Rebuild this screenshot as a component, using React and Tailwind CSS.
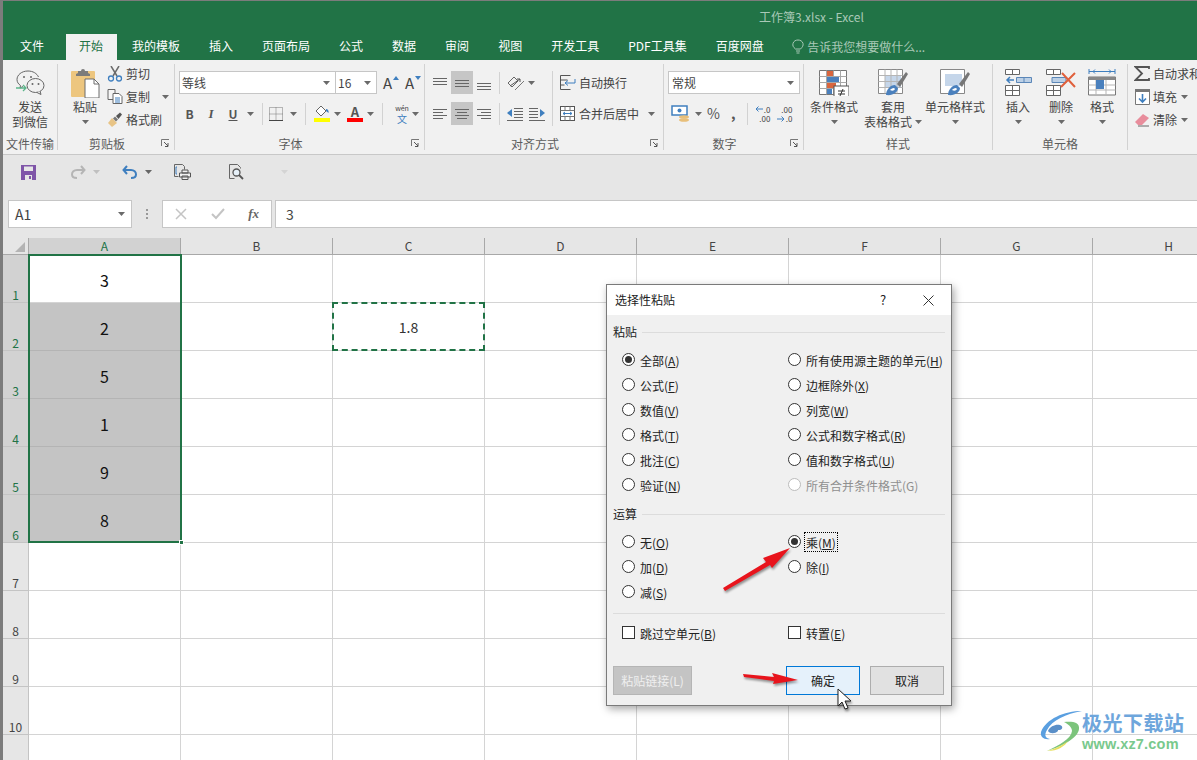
import React from "react";

const Caret = ({ className = "", color = "#6a6a6a" }) => (
  <svg width="7" height="4" viewBox="0 0 7 4" className={`shrink-0 ${className}`}>
    <path d="M0 0h7L3.5 4z" fill={color} />
  </svg>
);

const Sep = ({ className = "h-[24px]" }) => <div className={`w-px shrink-0 bg-[#d2d2d2] ${className}`} />;

const Launcher = () => (
  <svg width="9" height="9" viewBox="0 0 9 9" className="absolute right-[4px] bottom-[2px]">
    <path d="M.5 7V.5H8M.5.5" fill="none" stroke="#777" />
    <path d="M3 3l4 4M7 4v3.5H4" fill="none" stroke="#555" />
  </svg>
);

const Group = ({ width, label, launcher, children }) => (
  <div className={`relative flex h-full shrink-0 flex-col border-r border-[#d2d2d2] ${width}`}>
    <div className="h-[72px] shrink-0">{children}</div>
    <div className={`h-[15px] shrink-0 text-center text-[12px] leading-[15px] whitespace-nowrap text-[#5c5c5c] ${launcher ? "pr-[18px]" : ""}`}>{label}</div>
    {launcher && <Launcher />}
  </div>
);

const LargeButton = ({ icon, lines, caret = true, inlineCaret, width }) => (
  <div className={`flex shrink-0 flex-col items-center ${width}`}>
    <div className="flex h-[35px] items-center justify-center pt-[2px]">{icon}</div>
    {lines.map((l, i) => (
      <div key={l} className="flex h-[15px] items-center text-[12px] whitespace-nowrap text-[#444]">
        {l}
        {inlineCaret && i === lines.length - 1 && <Caret className="ml-[3px]" />}
      </div>
    ))}
    {caret && lines.length === 1 && <div className="flex h-[15px] items-center"><Caret /></div>}
    {caret && lines.length === 2 && !inlineCaret && <Caret className="mt-[5px]" />}
  </div>
);

const SmallButton = ({ icon, text, caret, caretGap = "ml-[6px]" }) => (
  <div className="flex h-[23px] items-center">
    <div className="flex w-[16px] justify-center">{icon}</div>
    <span className="ml-[3px] text-[12px] whitespace-nowrap text-[#444]">{text}</span>
    {caret && <Caret className={caretGap} />}
  </div>
);

const WechatIcon = () => (
  <svg width="30" height="26" viewBox="0 0 30 26">
    <path d="M13 1C6.5 1 2 5 2 9.500c0 2.500 1.300 4.500 3.500 6L5 18l3-1.500" fill="none" stroke="#666" />
    <path d="M13 1c5 0 9 2.500 10.500 6" fill="none" stroke="#666" />
    <circle cx="9" cy="7" r="1" fill="#666" /><circle cx="16" cy="7" r="1" fill="#666" />
    <ellipse cx="20.500" cy="15.500" rx="8.500" ry="7" fill="#f1f1f1" stroke="#666" />
    <path d="M25 21l1 3.500-4-2" fill="#f1f1f1" stroke="#666" />
    <circle cx="17.500" cy="14" r="1" fill="#666" /><circle cx="23.500" cy="14" r="1" fill="#666" />
    <path d="M1 18h10M8 15l3 3-3 3" fill="none" stroke="#5cb58a" strokeWidth="1.300" />
  </svg>
);

const PasteIcon = () => (
  <svg width="30" height="30" viewBox="0 0 30 30">
    <rect x="1" y="3" width="24" height="26" rx="1" fill="#edc67f" />
    <path d="M8 5V3h3a2 2 0 014 0h3v2l2 1v2H6V6z" fill="#7b7b7b" />
    <path d="M15 11h9l5 5v14H15z" fill="#fff" stroke="#6d6d6d" />
    <path d="M24 11v5h5" fill="none" stroke="#6d6d6d" />
  </svg>
);

const ScissorsIcon = () => (
  <svg width="16" height="16" viewBox="0 0 16 16">
    <path d="M4 0l6 10M12 0L6 10" stroke="#6b6b6b" strokeWidth="1.500" fill="none" />
    <circle cx="4" cy="12.500" r="2.500" fill="none" stroke="#3f7fbf" strokeWidth="1.300" />
    <circle cx="12" cy="12.500" r="2.500" fill="none" stroke="#3f7fbf" strokeWidth="1.300" />
  </svg>
);

const CopyIcon = () => (
  <svg width="16" height="15" viewBox="0 0 16 15">
    <path d="M1 .5h7v10H1z" fill="#f6f6f6" stroke="#666" />
    <path d="M6 4.500h6l3 3v7H6z" fill="#fff" stroke="#666" />
    <path d="M8 9h5M8 11h5M8 13h5" stroke="#3f7fbf" />
  </svg>
);

const BrushIcon = () => (
  <svg width="16" height="16" viewBox="0 0 16 16">
    <path d="M1 11l4-5 5 5-5 4z" fill="#e8c486" />
    <path d="M6 6.500l2-2 3 3-2 2z" fill="#777" />
    <path d="M9 4l4-3.500 2 2L11.500 7z" fill="#555" />
  </svg>
);

const GrowFont = ({ down }) => (
  <div className="relative flex h-[23px] w-[16px] items-center">
    <span className="text-[15px] leading-none text-[#444]">A</span>
    <svg width="6" height="4" viewBox="0 0 6 4" className="absolute top-[5px] right-0">
      <path d={down ? "M0 0h6L3 4z" : "M0 4h6L3 0z"} fill="#3f7fbf" />
    </svg>
  </div>
);

const BorderIcon = () => (
  <svg width="14" height="14" viewBox="0 0 14 14">
    <path d="M.5.500h13v13H.5zM7 .5v13M.5 7h13" fill="none" stroke="#777" strokeDasharray="1 1" />
    <path d="M0 13.500h14" stroke="#444" />
  </svg>
);

const FillIcon = () => (
  <svg width="16" height="17" viewBox="0 0 16 17">
    <path d="M7 1l5 5-5 5-5-5z" fill="#fff" stroke="#666" />
    <path d="M12 4c2 0 3 2 2.500 4L12 6z" fill="#3f7fbf" />
    <rect y="13" width="16" height="4" fill="#ffff00" />
  </svg>
);

const FontColorIcon = () => (
  <div className="flex w-[16px] flex-col items-center">
    <span className="text-[13px] leading-[13px] font-bold text-[#555]">A</span>
    <div className="h-[4px] w-[16px] bg-[#ff0000]" />
  </div>
);

const Wen = () => (
  <div className="flex w-[18px] flex-col items-center">
    <span className="h-[9px] text-[7px] leading-[9px] text-[#444]">wén</span>
    <span className="h-[11px] text-[10px] leading-[11px] text-[#3f7fbf]">文</span>
  </div>
);

const Lines = ({ rows, w = 14 }) => (
  <svg width={w} height="14" viewBox={`0 0 ${w} 14`}>
    {rows.map((r, i) => (
      <path key={i} d={`M${r[0]} ${r[1]}.5H${r[2]}`} stroke="#666" />
    ))}
  </svg>
);

const AlignSlot = ({ rows, active }) => (
  <div className={`flex h-[23px] w-[22px] items-center justify-center ${active ? "bg-[#c6c6c6]" : ""}`}>
    <Lines rows={rows} />
  </div>
);

const Orientation = () => (
  <svg width="18" height="16" viewBox="0 0 18 16">
    <path d="M1 8l6-6 4 4-6 6z" fill="none" stroke="#666" />
    <path d="M3 11l10-7M13 4l-3 0M13 4l0 3" stroke="#555" fill="none" />
    <path d="M8 15l9-9" stroke="#777" />
  </svg>
);

const IndentIcon = ({ flip }) => (
  <svg width="16" height="14" viewBox="0 0 16 14" className={flip ? "-scale-x-100" : ""}>
    <path d="M7 1.500h9M7 4.500h9M7 7.500h9M7 10.500h9M0 13.500h16" stroke="#666" />
    <path d="M0 6l5-4v8z" fill="#3f7fbf" />
  </svg>
);

const WrapIcon = () => (
  <svg width="16" height="15" viewBox="0 0 16 15">
    <path d="M.5.500h10M.5 14.500h10M.5.500v14M.5 5h7M.5 10h4" stroke="#555" fill="none" />
    <path d="M5 8h10V4M5 8l3-2.500M5 8l3 2.500" stroke="#3f7fbf" fill="none" />
  </svg>
);

const MergeIcon = () => (
  <svg width="15" height="15" viewBox="0 0 15 15">
    <rect x=".5" y=".5" width="14" height="14" fill="#fff" stroke="#555" />
    <path d="M.5 4.500h14M.5 10.500h14M5 .5v4M10 .5v4M5 10.500v4M10 10.500v4" stroke="#777" />
    <path d="M3 7.500h9M3 7.500l2-1.500M3 7.500L5 9M12 7.500L10 6M12 7.500L10 9" stroke="#3f7fbf" fill="none" />
  </svg>
);

const CurrencyIcon = () => (
  <svg width="19" height="18" viewBox="0 0 19 18">
    <rect x="1" y="1" width="15" height="9" fill="#fff" stroke="#3f7fbf" strokeWidth="1.500" />
    <circle cx="8.500" cy="5.500" r="2" fill="#3f7fbf" />
    <ellipse cx="13" cy="12" rx="5" ry="1.800" fill="#e8bf7a" />
    <ellipse cx="13" cy="15" rx="5" ry="1.800" fill="#e8bf7a" />
  </svg>
);

const DecimalIcon = ({ more }) => (
  <div className="relative flex h-[18px] w-[15px] flex-col items-end text-[8px] leading-[9px] text-[#444]">
    <span className="h-[9px]">{more ? ".00" : ".0"}</span>
    <span className="h-[9px]">{more ? ".0" : ".00"}</span>
    <svg width="8" height="6" viewBox="0 0 8 6" className={`absolute left-0 ${more ? "bottom-[1px]" : "top-[1px]"}`}>
      <path d={more ? "M0 3h7M4.500 .5L7 3 4.500 5.500" : "M8 3H1M3.500 .5L1 3l2.500 2.500"} stroke="#3f7fbf" fill="none" />
    </svg>
  </div>
);

const CondIcon = () => (
  <svg width="30" height="26" viewBox="0 0 30 26">
    <path d="M.5.500h27v24H.5z" fill="#fff" stroke="#777" />
    <path d="M.5 6.500h27M.5 12.500h27M.5 18.500h27M7.500.5v24M14.500.5v24M21.500.5v24" stroke="#a8a8a8" />
    <rect x="8" y="1" width="6" height="5" fill="#d9663f" />
    <rect x="8" y="7" width="12" height="5" fill="#4a80bd" />
    <rect x="8" y="13" width="9" height="5" fill="#d9663f" />
    <rect x="8" y="19" width="5" height="5" fill="#4a80bd" />
    <rect x="15" y="16" width="15" height="13" fill="#fff" stroke="#555" />
    <path d="M19 21h7M19 24h7M24 19l-3 7" stroke="#333" />
  </svg>
);

const TableIcon = ({ cell }) => (
  <svg width="30" height="28" viewBox="0 0 30 28">
    <path d="M.5.500h24v24H.5z" fill="#fff" stroke="#888" />
    {cell ? (
      <path d="M5 5h17v12H5z" fill="#c5d6ea" />
    ) : (
      <>
        <path d="M7 7h16v12H7z" fill="#c5d6ea" />
        <path d="M.5 6.500h24M.5 12.500h24M.5 18.500h24M7 .5v24M13 .5v24M19 .5v24" stroke="#b5b5b5" />
      </>
    )}
    <path d="M19 15L28 3l2 2-8 13z" fill="#777" />
    <path d="M8 26c0-5 4-10 9-10l3 3c0 4-5 8-12 7z" fill="#4a80bd" />
    <path d="M12 21c1-1 2-2 4-2l1 1c-1 2-3 2-5 1z" fill="#fff" />
  </svg>
);

const InsertIcon = () => (
  <svg width="27" height="27" viewBox="0 0 27 27">
    <path d="M.5.500h14v5H.5zM7.500.5v5M.5 16.500h14v10H.5zM.5 21.500h14M7.500 16.500v10" fill="#fff" stroke="#666" />
    <path d="M11.500 8.500h15v5h-15zM19 8.500v5" fill="#bcd0e6" stroke="#5b87b8" />
    <path d="M9 11H2M5 8l-3 3 3 3" stroke="#3f7fbf" strokeWidth="1.500" fill="none" />
  </svg>
);

const DeleteIcon = () => (
  <svg width="30" height="27" viewBox="0 0 30 27">
    <path d="M.5.500h14v5H.5zM7.500.5v5M.5 16.500h14v10H.5zM.5 21.500h14M7.500 16.500v10" fill="#fff" stroke="#666" />
    <path d="M6 8.500h14v5H6z" fill="#bcd0e6" stroke="#5b87b8" />
    <path d="M16 4l13 14M29 4L15 18" stroke="#e0603c" strokeWidth="2" />
  </svg>
);

const FormatIcon = () => (
  <svg width="28" height="30" viewBox="0 0 28 30">
    <path d="M1 3.500h26M1 1v5M27 1v5M5 3.500l2-2M5 3.500l2 2M23 3.500l-2-2M23 3.500l-2 2" stroke="#3f7fbf" fill="none" />
    <path d="M.5 9h27v18H.5z" fill="#fff" stroke="#777" />
    <path d="M.5 9h27v3H.5z" fill="#888" />
    <path d="M.5 17h27M.5 22h27M8 12v15M18 12v15" stroke="#b5b5b5" />
    <rect x="8" y="12" width="8" height="9" fill="#4a80bd" />
  </svg>
);

const SigmaIcon = () => (
  <svg width="16" height="15" viewBox="0 0 16 15">
    <path d="M15 3V1H1.500L8 7.500 1.500 14H15v-2" fill="none" stroke="#555" strokeWidth="1.800" />
  </svg>
);

const DownFillIcon = () => (
  <svg width="15" height="16" viewBox="0 0 15 16">
    <path d="M.5.500h14v15H.5z" fill="#fff" stroke="#777" />
    <path d="M0 0h15v3H0z" fill="#777" />
    <path d="M7.500 5v8M4 9.500l3.500 3.500L11 9.500" stroke="#3f7fbf" strokeWidth="1.600" fill="none" />
  </svg>
);

const EraserIcon = () => (
  <svg width="16" height="14" viewBox="0 0 16 14">
    <path d="M1 9l8-8 6 4-7 7H4z" fill="#e88d9c" />
    <path d="M4 13h11" stroke="#666" />
  </svg>
);

const SaveIcon = () => (
  <svg width="15" height="15" viewBox="0 0 15 15">
    <path d="M0 0h15v15H0z" fill="#7f55a8" />
    <path d="M3 1.500h9v4.500H3z" fill="#e6e6e6" />
    <path d="M4 10h7v5H4z" fill="#e6e6e6" />
    <path d="M8 11h2v3H8z" fill="#7f55a8" />
  </svg>
);

const UndoIcon = ({ color, flip }) => (
  <svg width="16" height="14" viewBox="0 0 16 14" className={flip ? "-scale-x-100" : ""}>
    <path d="M5 1L1.500 5 5 9" fill="none" stroke={color} strokeWidth="2" />
    <path d="M2 5h7c3 0 5 2 5 4.500S12 13 9 13" fill="none" stroke={color} strokeWidth="2" />
  </svg>
);

const PreviewIcon = () => (
  <svg width="17" height="16" viewBox="0 0 17 16">
    <path d="M.5.500h8l2 2v3M.5.500v12h4" fill="none" stroke="#666" />
    <path d="M3 3H2v7h1" stroke="#3f7fbf" fill="none" />
    <path d="M8 6h6v3H8zM5.500 9h11v4h-11zM8 12h6v3.500H8z" fill="#f1f1f1" stroke="#555" />
  </svg>
);

const MagnifierIcon = () => (
  <svg width="15" height="16" viewBox="0 0 15 16">
    <path d="M.5 14.500V.5h8l3 3v1M.5 14.500h5" fill="none" stroke="#666" />
    <circle cx="7.500" cy="8.500" r="3.500" fill="#e6f0f8" stroke="#555" strokeWidth="1.300" />
    <path d="M10 11l4 4" stroke="#555" strokeWidth="1.800" />
  </svg>
);

const Ribbon = () => (
  <div className="flex h-[95px] overflow-hidden border-b border-[#c8c8c8] bg-[#f1f1f1] pt-[4px] pb-[4px]">
    <Group width="w-[55px]" label="文件传输">
      <LargeButton width="w-full" caret={false} icon={<WechatIcon />} lines={["发送", "到微信"]} />
    </Group>

    <Group width="w-[117px]" label="剪贴板" launcher>
      <div className="flex pl-[12px]">
        <LargeButton width="w-[30px]" icon={<PasteIcon />} lines={["粘贴"]} />
        <div className="-mt-[2px] ml-[7px]">
          <SmallButton icon={<ScissorsIcon />} text="剪切" />
          <SmallButton icon={<CopyIcon />} text="复制" caret caretGap="ml-[12px]" />
          <SmallButton icon={<BrushIcon />} text="格式刷" />
        </div>
      </div>
    </Group>

    <Group width="w-[250px]" label="字体" launcher>
      <div className="pt-[7px] pl-[4px]">
        <div className="flex h-[23px] items-center">
          <div className="flex h-[23px] w-[157px] items-center justify-between border border-[#c6c6c6] bg-white pr-[5px] pl-[2px] text-[12px] text-[#444]">
            等线 <Caret />
          </div>
          <div className="flex h-[23px] w-[41px] items-center justify-between border border-l-0 border-[#c6c6c6] bg-white pr-[5px] pl-[2px] text-[12px] text-[#444]">
            16 <Caret />
          </div>
          <div className="ml-[6px]"><GrowFont /></div>
          <div className="ml-[6px]"><GrowFont down /></div>
        </div>
        <div className="mt-[8px] flex h-[23px] items-center">
          <span className="w-[21px] text-center text-[12px] font-bold text-[#555]">B</span>
          <span className="w-[22px] text-center font-['Liberation_Serif',serif] text-[13px] font-bold text-[#555] italic">I</span>
          <span className="w-[22px] text-center text-[12px] font-bold text-[#555] underline">U</span>
          <Caret className="ml-[3px]" />
          <Sep className="ml-[8px] h-[22px]" />
          <div className="ml-[6px]"><BorderIcon /></div>
          <Caret className="ml-[7px]" />
          <Sep className="ml-[8px] h-[22px]" />
          <div className="ml-[8px]"><FillIcon /></div>
          <Caret className="ml-[4px]" />
          <div className="ml-[6px]"><FontColorIcon /></div>
          <Caret className="ml-[4px]" />
          <Sep className="ml-[8px] h-[22px]" />
          <div className="ml-[10px]"><Wen /></div>
          <Caret className="ml-[1px]" />
        </div>
      </div>
    </Group>

    <Group width="w-[239px]" label="对齐方式" launcher>
      <div className="flex pt-[7px] pl-[4px]">
        <div className="w-[123px]">
          <div className="flex h-[23px] items-center">
            <AlignSlot rows={[[0, 2, 14], [0, 5, 14], [0, 8, 14]]} />
            <AlignSlot active rows={[[0, 4, 14], [0, 7, 14], [0, 10, 14]]} />
            <AlignSlot rows={[[0, 7, 14], [0, 10, 14], [0, 13, 14]]} />
            <Sep className="ml-[4px] h-[22px]" />
            <div className="ml-[7px]"><Orientation /></div>
            <Caret className="ml-[3px]" />
          </div>
          <div className="mt-[8px] flex h-[23px] items-center">
            <AlignSlot rows={[[0, 2, 14], [0, 5, 10], [0, 8, 14], [0, 11, 10]]} />
            <AlignSlot active rows={[[0, 2, 14], [2, 5, 12], [0, 8, 14], [2, 11, 12]]} />
            <AlignSlot rows={[[0, 2, 14], [4, 5, 14], [0, 8, 14], [4, 11, 14]]} />
            <Sep className="ml-[4px] h-[22px]" />
            <div className="ml-[7px]"><IndentIcon /></div>
            <div className="ml-[6px]"><IndentIcon flip /></div>
          </div>
        </div>
        <Sep className="h-[55px]" />
        <div className="pl-[7px]">
          <div className="flex h-[23px] items-center">
            <WrapIcon />
            <span className="ml-[3px] text-[12px] whitespace-nowrap text-[#444]">自动换行</span>
          </div>
          <div className="mt-[8px] flex h-[23px] items-center">
            <MergeIcon />
            <span className="ml-[4px] text-[12px] whitespace-nowrap text-[#444]">合并后居中</span>
            <Caret className="ml-[9px]" />
          </div>
        </div>
      </div>
    </Group>

    <Group width="w-[140px]" label="数字" launcher>
      <div className="pt-[7px] pl-[4px]">
        <div className="flex h-[23px] w-[132px] items-center justify-between border border-[#c6c6c6] bg-white pr-[5px] pl-[3px] text-[12px] text-[#444]">
          常规 <Caret />
        </div>
        <div className="mt-[8px] flex h-[23px] items-center pl-[3px]">
          <CurrencyIcon />
          <Caret className="ml-[5px]" />
          <span className="ml-[5px] text-[14px] text-[#555]">%</span>
          <span className="ml-[11px] text-[14px] font-bold text-[#555]">,</span>
          <Sep className="ml-[12px] h-[22px]" />
          <div className="ml-[7px]"><DecimalIcon /></div>
          <div className="ml-[7px]"><DecimalIcon more /></div>
        </div>
      </div>
    </Group>

    <Group width="w-[189px]" label="样式">
      <div className="flex pl-[4px]">
        <LargeButton width="w-[52px]" icon={<CondIcon />} lines={["条件格式"]} />
        <LargeButton width="ml-[2px] w-[62px]" inlineCaret icon={<TableIcon />} lines={["套用", "表格格式"]} />
        <LargeButton width="ml-[1px] w-[60px]" icon={<TableIcon cell />} lines={["单元格样式"]} />
      </div>
    </Group>

    <Group width="w-[135px]" label="单元格">
      <div className="flex pl-[5px]">
        <LargeButton width="w-[40px]" icon={<InsertIcon />} lines={["插入"]} />
        <LargeButton width="ml-[3px] w-[40px]" icon={<DeleteIcon />} lines={["删除"]} />
        <LargeButton width="ml-[1px] w-[40px]" icon={<FormatIcon />} lines={["格式"]} />
      </div>
    </Group>

    <div className="-mt-[2px] min-w-0 flex-1 overflow-hidden pl-[6px]">
      <SmallButton icon={<SigmaIcon />} text="自动求和" />
      <SmallButton icon={<DownFillIcon />} text="填充" caret caretGap="ml-[4px]" />
      <SmallButton icon={<EraserIcon />} text="清除" caret caretGap="ml-[4px]" />
    </div>
  </div>
);

const tabs = ["我的模板", "插入", "页面布局", "公式", "数据", "审阅", "视图", "开发工具", "PDF工具集", "百度网盘"];

const TitleBar = () => (
  <div className="bg-[#217346]">
    <div className="h-[33px] pt-[8px] pl-[756px] text-[12px] leading-[16px] text-[#a9c9b7]">工作簿3.xlsx - Excel</div>
    <div className="flex h-[26px] items-start pl-[2.5px] text-[12px] text-white">
      <div className="mr-[6px] h-full px-[14.500px] pt-[3px]">文件</div>
      <div className="mx-[1px] h-full bg-[#f1f1f1] px-[13.500px] pt-[3px] text-[#217346]">开始</div>
      {tabs.map((t) => (
        <div key={t} className="h-full px-[14.500px] pt-[3px] whitespace-nowrap">{t}</div>
      ))}
      <div className="ml-[14px] flex h-full items-center pb-[1px] text-[#a9c9b7]">
        <svg width="12" height="15" viewBox="0 0 12 15" className="mr-[3px]">
          <path d="M3.500 10C1 8 .5 6.500 1 4.500 1.500 2 4 1 6 1s4.500 1 5 3.500c.5 2-.5 3.500-2.500 5.500zM4 12h4M4.500 14h3" fill="none" stroke="#a9c9b7" />
        </svg>
        告诉我您想要做什么...
      </div>
    </div>
  </div>
);

const QuickAccess = () => (
  <div className="flex h-[42px] items-center bg-[#e6e6e6] pb-[8px]">
    <div className="ml-[18px]"><SaveIcon /></div>
    <div className="ml-[34px]"><UndoIcon color="#b5b5b5" flip /></div>
    <Caret className="ml-[7px]" color="#c0c0c0" />
    <div className="ml-[22px]"><UndoIcon color="#3f7fbf" /></div>
    <Caret className="ml-[7px]" color="#666" />
    <div className="ml-[22px]"><PreviewIcon /></div>
    <div className="ml-[38px]"><MagnifierIcon /></div>
    <Caret className="ml-[37px]" color="#d4d4d4" />
  </div>
);

const FormulaBar = () => (
  <div className="flex h-[41px] items-start bg-[#e6e6e6] pt-[3px] pl-[5px] text-[#444]">
    <div className="flex h-[28px] w-[124px] items-center justify-between border border-[#c6c6c6] bg-white pr-[6px] pl-[6px] text-[14px]">
      A1 <Caret />
    </div>
    <div className="flex h-[28px] w-[30px] flex-col items-center justify-center gap-[2px]">
      <i className="h-[2px] w-[2px] bg-[#999]" /><i className="h-[2px] w-[2px] bg-[#999]" /><i className="h-[2px] w-[2px] bg-[#999]" />
    </div>
    <div className="flex h-[28px] w-[110px] items-center justify-between border border-[#c6c6c6] bg-white px-[12px]">
      <svg width="12" height="12" viewBox="0 0 12 12"><path d="M1 1l10 10M11 1L1 11" stroke="#c4c4c4" strokeWidth="1.500" /></svg>
      <svg width="14" height="12" viewBox="0 0 14 12"><path d="M1 6l4 4 8-9" stroke="#c4c4c4" strokeWidth="2" fill="none" /></svg>
      <span className="font-['Liberation_Serif',serif] text-[13px] font-bold text-[#666] italic">fx</span>
    </div>
    <div className="ml-[3px] flex h-[28px] flex-1 items-center border border-r-0 border-[#c6c6c6] bg-white pl-[10px] text-[14px]">3</div>
  </div>
);

const columns = ["A", "B", "C", "D", "E", "F", "G", "H"];
const values = [3, 2, 5, 1, 9, 8];

const Sheet = () => (
  <div className="bg-white">
    <div className="flex h-[17px] bg-[#e6e6e6]">
      <div className="relative w-[26px] shrink-0 border-r border-b border-[#a8a8a8]">
        <svg width="10" height="10" viewBox="0 0 10 10" className="absolute top-[4px] right-[3px]"><path d="M10 0v10H0z" fill="#b4b4b4" /></svg>
      </div>
      {columns.map((c, i) => (
        <div key={c} className={`w-[152px] shrink-0 border-r border-b border-[#a8a8a8] text-center text-[12px] leading-[16px] ${i === 0 ? "bg-[#d2d2d2] text-[#217346]" : "text-[#444]"}`}>
          {c}
        </div>
      ))}
    </div>
    {Array.from({ length: 11 }, (_, r) => (
      <div key={r} className="flex h-[48px]">
        <div className={`flex w-[26px] shrink-0 items-end justify-center border-r border-b border-[#c4c4c4] text-[12px] leading-[15px] ${r < 6 ? "bg-[#d2d2d2] text-[#217346]" : "bg-[#e6e6e6] text-[#444]"}`}>
          {r < 10 ? r + 1 : ""}
        </div>
        {columns.map((c, i) => {
          const isA = i === 0 && r < 6;
          const shaded = isA && r > 0;
          return (
            <div key={c} className={`relative flex w-[152px] shrink-0 items-center justify-center border-r border-b pt-[2px] text-[16px] text-[#111] ${shaded ? "border-[#b4b4b4] bg-[#c4c4c4]" : "border-[#d4d4d4]"}`}>
              {isA && values[r]}
              {i === 2 && r === 1 && (
                <>
                  <span className="text-[14px] text-[#333]">1.8</span>
                  <div className="absolute -top-px -right-px -bottom-px -left-px border-2 border-dashed border-[#217346]" />
                </>
              )}
            </div>
          );
        })}
      </div>
    ))}
  </div>
);

const Label = ({ text, hot, disabled }) => (
  <span className={`text-[12px] whitespace-nowrap ${disabled ? "text-[#8f8f8f]" : "text-[#222]"}`}>
    {text}(<span className={disabled ? "" : "underline"}>{hot}</span>)
  </span>
);

const Radio = ({ text, hot, checked, disabled, focus }) => (
  <div className="flex h-[25px] items-center">
    <div className={`flex h-[13px] w-[13px] shrink-0 items-center justify-center rounded-full border bg-white ${disabled ? "border-[#bcbcbc]" : "border-[#333]"}`}>
      {checked && <div className="h-[7px] w-[7px] rounded-full bg-[#333]" />}
    </div>
    <div className={`ml-[3px] border border-dotted px-px leading-[17px] ${focus ? "border-black" : "border-transparent"}`}>
      <Label text={text} hot={hot} disabled={disabled} />
    </div>
  </div>
);

const Check = ({ text, hot }) => (
  <div className="flex h-[20px] items-center">
    <div className="h-[13px] w-[13px] border border-[#333] bg-white" />
    <div className="ml-[4px] px-px"><Label text={text} hot={hot} /></div>
  </div>
);

const SectionTitle = ({ text }) => (
  <div className="flex h-[16px] items-center gap-[5px]">
    <span className="text-[12px] text-[#222]">{text}</span>
    <div className="h-px flex-1 bg-[#dcdcdc]" />
  </div>
);

const pasteLeft = [["全部", "A", true], ["公式", "F"], ["数值", "V"], ["格式", "T"], ["批注", "C"], ["验证", "N"]];
const pasteRight = [["所有使用源主题的单元", "H"], ["边框除外", "X"], ["列宽", "W"], ["公式和数字格式", "R"], ["值和数字格式", "U"], ["所有合并条件格式", "G", false, true]];

const Dialog = () => (
  <div className="absolute top-[284px] left-[606px] h-[422px] w-[346px] border border-[#7a7a7a] bg-[#f0f0f0] shadow-[2px_3px_8px_rgba(0,0,0,0.35)]">
    <div className="flex h-[30px] items-center bg-white pl-[8px] text-[12px] text-[#222]">
      选择性粘贴
      <span className="ml-[205px] text-[13px]">?</span>
      <svg width="11" height="11" viewBox="0 0 11 11" className="ml-[37px]"><path d="M.5.500l10 10M10.500.5l-10 10" stroke="#333" /></svg>
    </div>
    <div className="px-[6px] pt-[9px]">
      <SectionTitle text="粘贴" />
      <div className="mt-[7px] grid grid-cols-[166px_1fr] pl-[9px]">
        {pasteLeft.map((l, i) => (
          <React.Fragment key={l[0]}>
            <Radio text={l[0]} hot={l[1]} checked={l[2]} />
            <Radio text={pasteRight[i][0]} hot={pasteRight[i][1]} disabled={pasteRight[i][3]} />
          </React.Fragment>
        ))}
      </div>
      <div className="mt-[9px]"><SectionTitle text="运算" /></div>
      <div className="mt-[7px] grid grid-cols-[166px_1fr] pl-[9px]">
        <Radio text="无" hot="O" />
        <Radio text="乘" hot="M" checked focus />
        <Radio text="加" hot="D" />
        <Radio text="除" hot="I" />
        <Radio text="减" hot="S" />
      </div>
      <div className="mt-[9px] h-px bg-[#dcdcdc]" />
      <div className="mt-[8px] grid grid-cols-[166px_1fr] pl-[9px]">
        <Check text="跳过空单元" hot="B" />
        <Check text="转置" hot="E" />
      </div>
      <div className="mt-[24px] flex text-[12px]">
        <div className="flex h-[29px] w-[79px] items-center justify-center border border-[#b5b5b5] bg-[#c4c4c4] text-[#efefef]">粘贴链接(L)</div>
        <div className="ml-[94px] flex h-[29px] w-[74px] items-center justify-center border border-[#0078d7] bg-[#e5f1fb] text-[#222]">确定</div>
        <div className="ml-[10px] flex h-[29px] w-[74px] items-center justify-center border border-[#adadad] bg-[#e1e1e1] text-[#222]">取消</div>
      </div>
    </div>
  </div>
);

const Annotations = () => (
  <svg width="140" height="190" viewBox="0 0 140 190" className="absolute top-[535px] left-[720px] drop-shadow-[1px_2px_1px_rgba(0,0,0,0.4)]">
    <path d="M3 53L46 27l-3-4L70 13 52 33l-2-3L5 56z" fill="#e8141c" />
    <path d="M23 139l31 3-2-4 26 7-25 4 1-3-30-4z" fill="#e8141c" />
    <path d="M118 154v17l4-4 3 7 3-1-3-7h6z" fill="#fff" stroke="#222" />
  </svg>
);

const Watermark = () => (
  <div className="absolute top-[709px] left-[1040px] flex items-center whitespace-nowrap">
    <svg width="42" height="44" viewBox="0 0 42 44">
      <path d="M42 2C24 2 6 10 1 23c-1 5 3 8 9 7-5-1-6-4-3-9C12 11 26 5 42 2z" fill="#5a9fe0" />
      <path d="M8 22c2-5 8-7 12-6 3 1 3 4 0 5-3 0-5-1-8 1 3-3 7-1 6 0-3 3-8 3-10 0z" fill="#5a8fc8" />
      <path d="M24 13c8-1 16 0 15 7-1 9-16 17-32 22 12-6 24-12 25-20 0-4-4-7-8-9z" fill="#7cc47c" />
      <path d="M7 42c8-2 16-6 21-10-3 5-10 10-21 10z" fill="#e8e060" />
    </svg>
    <div className="flex flex-col">
      <span className="text-[20px] leading-[26px] font-bold tracking-[0.5px] text-[#6ea6dc]">极光下载站</span>
      <span className="font-['Liberation_Sans',sans-serif] text-[14.500px] leading-[16px] font-bold tracking-[0.2px] text-[#79c98d]">www.xz7.com</span>
    </div>
  </div>
);

export default function App() {
  return (
    <div className="relative h-[760px] w-[1197px] overflow-hidden border-t border-l-[3px] border-[#7c7c7c] bg-white font-['Noto_Sans_CJK_SC',sans-serif]">
      <TitleBar />
      <Ribbon />
      <QuickAccess />
      <FormulaBar />
      <Sheet />
      <div className="absolute top-[253px] left-[25px] h-[289px] w-[154px] border-2 border-[#217346]" />
      <div className="absolute top-[539px] left-[176px] h-[5px] w-[5px] border border-white bg-[#217346]" />
      <div className="absolute top-[280px] -left-[3px] h-[40px] w-[3px] bg-[#555]" />
      <div className="absolute -top-px -left-[3px] h-[760px] w-[1197px]">
        <Dialog />
        <Annotations />
        <Watermark />
      </div>
    </div>
  );
}
